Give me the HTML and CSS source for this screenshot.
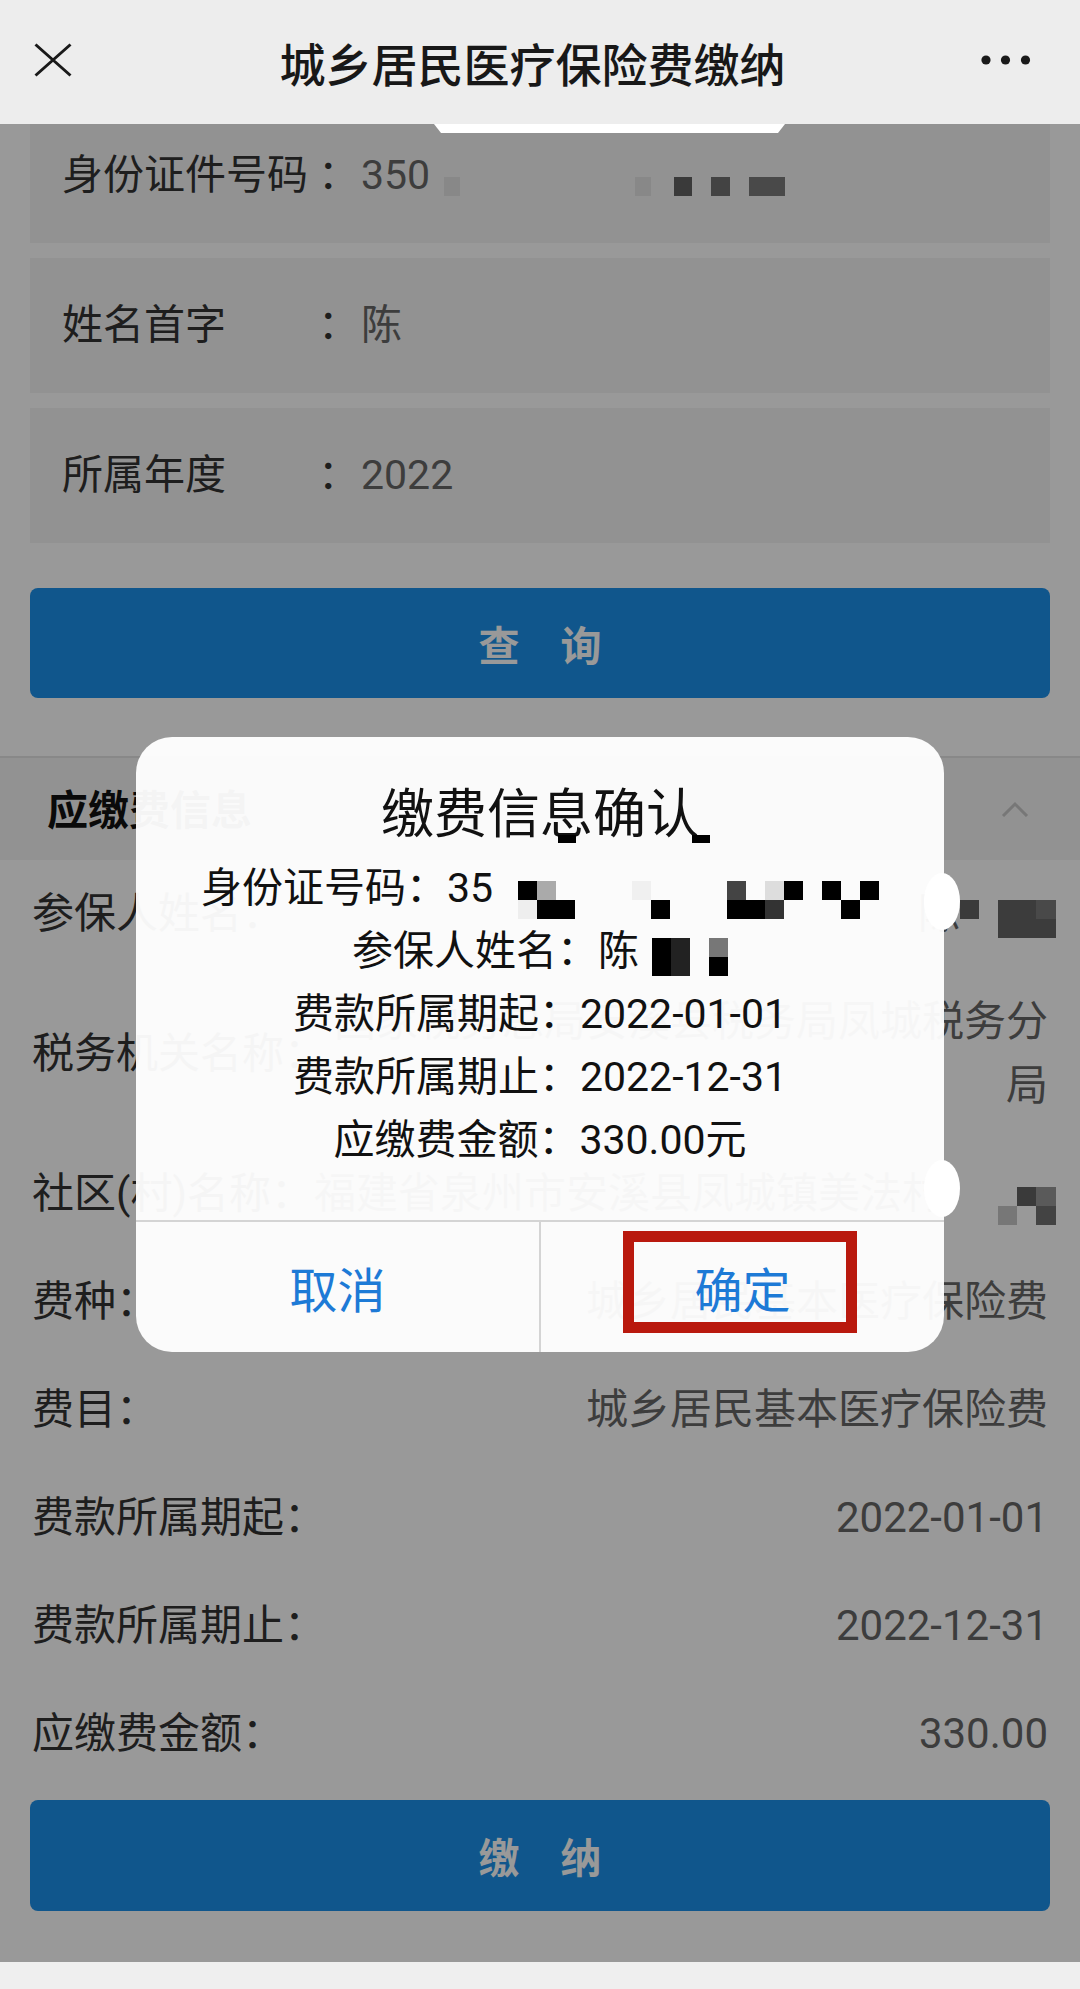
FILE: index.html
```html
<!DOCTYPE html>
<html lang="zh-CN">
<head>
<meta charset="utf-8">
<title>城乡居民医疗保险费缴纳</title>
<link rel="stylesheet" href="styles.css">
</head>
<body>
<div class="app">
  <header class="topbar">
    <svg class="topbar-close" width="38" height="34" viewBox="0 0 38 34"><path d="M1.5 1.5 L36.5 32.5 M36.5 1.5 L1.5 32.5" stroke="#1a1a1a" stroke-width="3" fill="none"/></svg>
    <h1 class="topbar-title">城乡居民医疗保险费缴纳</h1>
    <svg class="topbar-more" width="50" height="10" viewBox="0 0 50 10"><circle cx="5" cy="5" r="4.6" fill="#1a1a1a"/><circle cx="24.5" cy="5" r="4.6" fill="#1a1a1a"/><circle cx="44.5" cy="5" r="4.6" fill="#1a1a1a"/></svg>
  </header>

  <main class="webview">
    <div class="page">
      <section class="query">
        <div class="field"><span class="field-label">身份证件号码</span><span class="field-colon">：</span><span class="field-value">350<span class="mz mz-card"></span></span></div>
        <div class="field"><span class="field-label">姓名首字</span><span class="field-colon">：</span><span class="field-value">陈</span></div>
        <div class="field"><span class="field-label">所属年度</span><span class="field-colon">：</span><span class="field-value">2022</span></div>
        <button class="btn btn-query">查　询</button>
      </section>

      <section class="info">
        <div class="info-head">
          <span class="info-title">应缴费信息</span>
          <svg class="info-toggle" width="28" height="16" viewBox="0 0 28 16"><path d="M2 15 L14 3 L26 15" fill="none" stroke="#c6c6c6" stroke-width="3"/></svg>
        </div>
        <div class="row"><span class="row-label">参保人姓名：</span><span class="row-value">陈<span class="mz mz-person"></span></span></div>
        <div class="row"><span class="row-label">税务机关名称：</span><span class="row-value">国家税务总局安溪县税务局凤城税务分局</span></div>
        <div class="row"><span class="row-label">社区(村)名称：</span><span class="row-value nowrap">福建省泉州市安溪县凤城镇美法村<span class="mz mz-village"></span></span></div>
        <div class="row"><span class="row-label">费种：</span><span class="row-value">城乡居民基本医疗保险费</span></div>
        <div class="row"><span class="row-label">费目：</span><span class="row-value">城乡居民基本医疗保险费</span></div>
        <div class="row"><span class="row-label">费款所属期起：</span><span class="row-value">2022-01-01</span></div>
        <div class="row"><span class="row-label">费款所属期止：</span><span class="row-value">2022-12-31</span></div>
        <div class="row"><span class="row-label">应缴费金额：</span><span class="row-value">330.00</span></div>
        <div class="pay-wrap"><button class="btn btn-pay">缴　纳</button></div>
      </section>
    </div>

    <div class="mask"></div>

    <div class="dialog">
      <div class="dialog-body">
        <h2 class="dialog-title">缴费信息确认</h2>
        <p class="dialog-line">身份证号码：35<span class="mz mz-id"></span></p>
        <p class="dialog-line">参保人姓名：陈<span class="mz mz-name"></span></p>
        <p class="dialog-line">费款所属期起：2022-01-01</p>
        <p class="dialog-line">费款所属期止：2022-12-31</p>
        <p class="dialog-line">应缴费金额：330.00元</p>
      </div>
      <div class="dialog-actions">
        <div class="dialog-btn">取消</div>
        <div class="dialog-btn">确定</div>
      </div>
      <span class="blot blot-a"></span>
      <span class="blot blot-b"></span>
      <span class="highlight"></span>
    </div>

    <span class="smudge smudge-top"></span>
    <span class="smudge smudge-side smudge-1"></span>
    <span class="smudge smudge-side smudge-2"></span>
  </main>

  <footer class="bottombar"></footer>
</div>
</body>
</html>
```

FILE: styles.css
```css
* { box-sizing: border-box; margin: 0; padding: 0; }

html, body {
  width: 1080px;
  height: 1989px;
  overflow: hidden;
}

body {
  font-family: Roboto, "Noto Sans CJK SC", sans-serif;
  color: #333;
  background: #fff;
}

.app {
  display: flex;
  flex-direction: column;
  height: 1989px;
}

/* ---------- top bar ---------- */
.topbar {
  flex: none;
  height: 124px;
  background: #ededed;
  display: grid;
  grid-template-columns: 1fr auto 1fr;
  align-items: center;
  padding: 0 49px 0 34px;
}
.topbar-close { justify-self: start; display: block; margin-top: -4px; }
.topbar-more { justify-self: end; display: block; margin-top: -4px; }
.topbar-title {
  font-family: "Noto Sans CJK SC", sans-serif;
  font-size: 46px;
  font-weight: 500;
  line-height: 1;
  color: #181818;
}

/* ---------- web view ---------- */
.webview {
  position: relative;
  flex: 1;
  overflow: hidden;
  background: #fff;
}
.page { margin-top: -16px; }

.query {
  padding: 0 30px;
  display: flex;
  flex-direction: column;
  gap: 15px;
}
.field {
  height: 135px;
  background: #f3f3f3;
  display: flex;
  align-items: center;
  padding: 0 32px;
  font-size: 41px;
  line-height: 1;
}
.field-label { flex: none; width: 256px; color: #333; }
.field-colon { flex: none; color: #333; }
.field-value {
  color: #666;
  margin-left: 2px;
  display: flex;
  align-items: center;
}

.btn {
  display: block;
  width: 100%;
  border: none;
  border-radius: 8px;
  background: #1b8fe9;
  color: #fff;
  font-family: "Noto Sans CJK SC", sans-serif;
  font-size: 41px;
  font-weight: 700;
  line-height: 1;
}
.btn-query { height: 110px; margin-top: 30px; }
.pay-wrap { padding: 12px 30px 0; }
.btn-pay { height: 111px; }

.info { margin-top: 58px; }
.info-head {
  height: 104px;
  background: #f3f3f3;
  border-top: 2px solid #e3e3e3;
  display: flex;
  align-items: center;
  justify-content: space-between;
  padding: 0 51px 4px 47px;
}
.info-title {
  font-family: "Noto Sans CJK SC", sans-serif;
  font-size: 41px;
  font-weight: 700;
  color: #111;
  line-height: 1;
}
.info-toggle { display: block; margin-top: 4px; }

.row {
  display: flex;
  align-items: center;
  padding: 22px 32px;
  font-size: 42px;
  line-height: 64px;
}
.row-label { flex: none; color: #333; }
.row-value { flex: 1; min-width: 0; text-align: right; color: #666; }
.nowrap { white-space: nowrap; }

/* ---------- mosaic (censored parts of the screenshot) ---------- */
.mz { display: inline-block; flex: none; }

.mz-card {
  width: 355px;
  height: 19px;
  margin-top: 22px;
  background: linear-gradient(to right,
    transparent 0 14px, #e3e3e3 14px 30px, transparent 30px 205px,
    #e3e3e3 205px 221px, transparent 221px 244px, #616161 244px 262px,
    transparent 262px 281px, #717171 281px 300px, transparent 300px 319px,
    #7b7b7b 319px 355px);
}

.mz-person {
  width: 96px;
  height: 38px;
  margin-right: -8px;
  vertical-align: -10px;
  background:
    linear-gradient(to right, #616161 0 19px, transparent 19px 38px, #646464 38px 76px, #7b7b7b 76px 96px) top / 100% 19px no-repeat,
    linear-gradient(to right, transparent 0 38px, #646464 38px 96px) bottom / 100% 19px no-repeat;
}

.mz-village {
  width: 112px;
  height: 38px;
  margin-right: -8px;
  vertical-align: -17px;
  background:
    linear-gradient(to right, transparent 0 73px, #616161 73px 92px, #969696 92px 112px) top / 100% 19px no-repeat,
    linear-gradient(to right, transparent 0 54px, #c6c6c6 54px 73px, transparent 73px 92px, #717171 92px 112px) bottom / 100% 19px no-repeat;
}

.mz-id {
  width: 386px;
  height: 38px;
  vertical-align: -17px;
  background:
    linear-gradient(to right,
      transparent 0 25px, #000 25px 44px, #aaa 44px 63px, transparent 63px 139px,
      #f0f0f0 139px 158px, transparent 158px 234px, #444 234px 253px,
      transparent 253px 272px, #ddd 272px 291px, #000 291px 310px,
      transparent 310px 329px, #000 329px 348px, transparent 348px 367px,
      #000 367px 386px) top / 100% 19px no-repeat,
    linear-gradient(to right,
      transparent 0 25px, #eee 25px 44px, #000 44px 82px, transparent 82px 158px,
      #000 158px 177px, transparent 177px 234px, #000 234px 272px,
      #333 272px 291px, transparent 291px 348px, #000 348px 367px,
      transparent 367px) bottom / 100% 19px no-repeat;
}

.mz-name {
  width: 89px;
  height: 38px;
  vertical-align: -11px;
  background:
    linear-gradient(to right, transparent 0 13px, #000 13px 32px, #222 32px 51px, transparent 51px 70px, #777 70px 89px) top / 100% 19px no-repeat,
    linear-gradient(to right, transparent 0 13px, #000 13px 32px, #222 32px 51px, transparent 51px 70px, #000 70px 89px) bottom / 100% 19px no-repeat;
}

/* ---------- mask + dialog ---------- */
.mask {
  position: absolute;
  inset: 0;
  background: rgba(0, 0, 0, 0.4);
}

.dialog {
  position: absolute;
  left: 136px;
  top: 613px;
  width: 808px;
  height: 615px;
  border-radius: 36px;
  background: rgba(255, 255, 255, 0.955);
  display: flex;
  flex-direction: column;
  color: #111;
}
.dialog-body {
  flex: 1;
  padding-top: 38px;
  text-align: center;
}
.dialog-title {
  font-family: "Noto Sans CJK SC", sans-serif;
  font-size: 53px;
  font-weight: 400;
  line-height: 70px;
  margin-bottom: 12px;
}
.dialog-line {
  font-size: 41px;
  line-height: 63px;
  white-space: nowrap;
}
.dialog-actions {
  flex: none;
  height: 132px;
  border-top: 2px solid #d4d4d4;
  display: flex;
}
.dialog-btn {
  flex: 1;
  display: flex;
  align-items: center;
  justify-content: center;
  font-family: "Noto Sans CJK SC", sans-serif;
  font-size: 48px;
  color: #1d7ad6;
}
.dialog-btn + .dialog-btn { border-left: 2px solid #d4d4d4; }

.blot {
  position: absolute;
  top: 98px;
  width: 18px;
  height: 8px;
  background: #000;
}
.blot-a { left: 422px; }
.blot-b { left: 556px; }

.highlight {
  position: absolute;
  left: 487px;
  top: 494px;
  width: 234px;
  height: 102px;
  border: 11px solid #b9190e;
}

/* white smudges left by the censoring */
.smudge { position: absolute; background: #fff; }
.smudge-top {
  top: 0;
  left: 434px;
  width: 351px;
  height: 9px;
  clip-path: polygon(0 0, 100% 0, 98% 100%, 2% 100%);
}
.smudge-side {
  left: 924px;
  width: 36px;
  height: 57px;
  border-radius: 50%;
}
.smudge-1 { top: 749px; }
.smudge-2 { top: 1036px; }

/* ---------- bottom bar ---------- */
.bottombar {
  flex: none;
  height: 27px;
  background: #efefef;
}
```
